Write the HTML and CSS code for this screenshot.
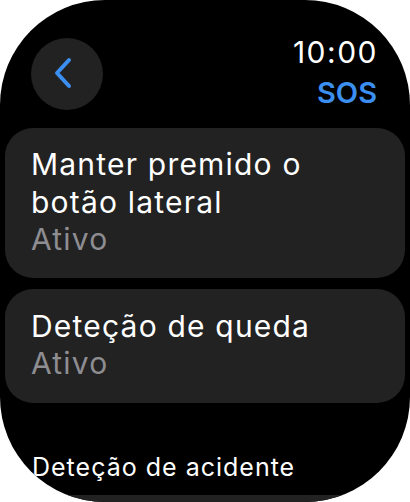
FILE: index.html
```html
<!DOCTYPE html>
<html lang="pt">
<head>
    <meta charset="UTF-8">
    <meta name="viewport" content="width=device-width, initial-scale=1.0">
    <title>SOS</title>
    <link rel="stylesheet" href="styles.css">
</head>
<body>

<div class="watch">
    <!-- barra de topo -->
    <div class="top-bar">
        <button class="back-btn" aria-label="Voltar">
            <svg width="24" height="34" viewBox="0 0 24 34">
                <path d="M16 3 L4 16 L16 29" fill="none" stroke="#3b8ff0" stroke-width="4" stroke-linecap="round" stroke-linejoin="round"/>
            </svg>
        </button>
        <div class="top-right">
            <div class="time">10:00</div>
            <div class="title">SOS</div>
        </div>
    </div>

    <!-- lista de opções -->
    <div class="list">
        <div class="card">
            <div class="card-title">Manter premido o botão lateral</div>
            <div class="card-value">Ativo</div>
        </div>
        <div class="card card-short">
            <div class="card-title">Deteção de queda</div>
            <div class="card-value">Ativo</div>
        </div>
        <div class="section-label">Deteção de acidente</div>
        <div class="card card-cut"></div>
    </div>
</div>

</body>
</html>
```

FILE: styles.css
```css
html, body {
    margin: 0;
    padding: 0;
    background-color: #ffffff;
}
.watch {
    width: 410px;
    height: 502px;
    background-color: #000000;
    border-radius: 105px;
    overflow: hidden;
    font-family: Inter, "Open Sans", sans-serif;
    color: #ffffff;
}
.top-bar {
    display: flex;
    justify-content: space-between;
    align-items: flex-start;
    padding: 34px 33px 0 31px;
    height: 94px;
}
.back-btn {
    width: 72px;
    height: 72px;
    margin-top: 4px;
    border: none;
    border-radius: 50%;
    background-color: #222222;
    display: flex;
    align-items: center;
    justify-content: center;
    padding: 0 4px 0 0;
}
.top-right {
    text-align: right;
}
.time {
    font-size: 30px;
    line-height: 36px;
    letter-spacing: 1.5px;
    margin-right: -1px;
}
.title {
    font-size: 29px;
    line-height: 46px;
    font-weight: 600;
    color: #3b8ff0;
}
.list {
    padding: 0 5px;
}
.card {
    background-color: #222222;
    border-radius: 28px;
    padding: 17px 26px 20px 26px;
    margin-bottom: 11px;
    letter-spacing: 1.2px;
}
.card-short {
    padding-top: 18px;
    padding-bottom: 21px;
}
.card-title {
    font-size: 30px;
    line-height: 38px;
}
.card-value {
    font-size: 30px;
    line-height: 37px;
    color: #8d8d92;
}
.section-label {
    padding: 38px 26px 0 27px;
    font-size: 25px;
    line-height: 30px;
    letter-spacing: 1px;
}
.card-cut {
    margin-top: 13px;
    height: 60px;
    padding: 0;
}
```
